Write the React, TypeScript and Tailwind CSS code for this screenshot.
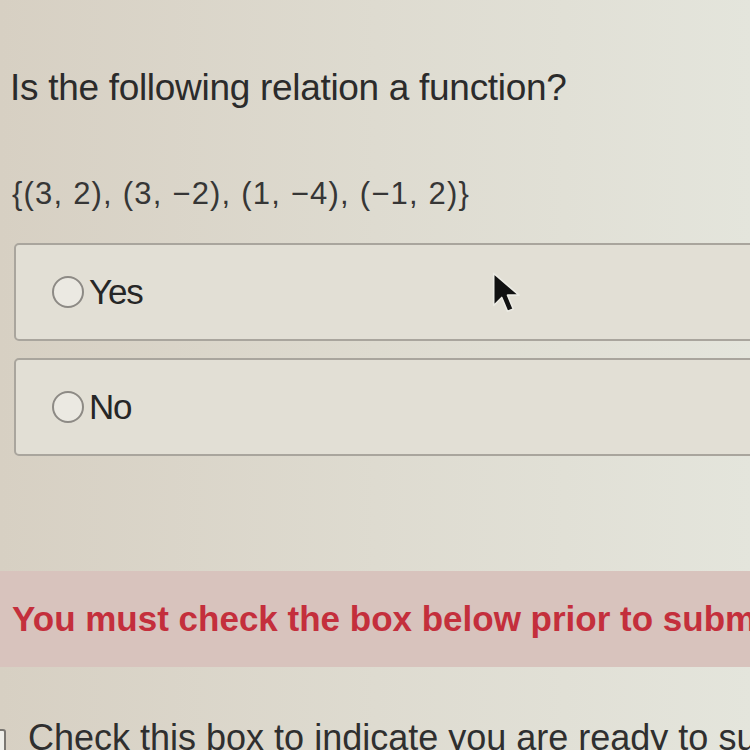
import React from "react";

function Cursor() {
  return (
    <svg
      className="absolute left-[490px] top-[271px]"
      width="35"
      height="46"
      viewBox="0 0 30 40"
    >
      <path
        d="M3 2 L3 30 L10 23 L15 35 L20 33 L15 21 L25 21 Z"
        fill="#111111"
        stroke="#ecebe4"
        strokeWidth="1.4"
        strokeLinejoin="round"
      />
    </svg>
  );
}

function Choice({ label }: { label: string }) {
  return (
    <label className="flex items-center h-[98px] w-[780px] rounded-[5px] border-2 border-[#a9a59d] bg-[#e2dfd5] pl-[36px]">
      <span className="shrink-0 inline-block w-[32px] h-[32px] rounded-full border-2 border-[#8d8a85] bg-[#ebe9e2]" />
      <span className="ml-[5px] text-[35px] leading-[40px] tracking-[-1.2px] text-[#262626]">{label}</span>
    </label>
  );
}

export default function App() {
  return (
    <div
      className="relative w-[750px] h-[750px] overflow-hidden bg-linear-to-r from-[#d7d0c3] via-[#dedbd0] to-[#e4e5dc]"
      style={{ fontFamily: '"Liberation Sans", Arial, sans-serif' }}
    >
      <div className="pl-[10px] pt-[68px]">
        <h1 className="text-[37px] leading-[40px] tracking-[-0.3px] whitespace-nowrap text-[#2b2b2b]">
          Is the following relation a function?
        </h1>
        <p className="mt-[68px] pl-[2px] text-[31px] leading-[36px] tracking-[1.2px] whitespace-nowrap text-[#363636]">
          {"{(3, 2), (3, \u22122), (1, \u22124), (\u22121, 2)}"}
        </p>
      </div>

      <div className="mt-[31px] flex flex-col gap-[17px] pl-[14px]">
        <Choice label="Yes" />
        <Choice label="No" />
      </div>

      <div className="mt-[115px] flex items-center h-[96px] bg-[#d8c3bd] pl-[12px]">
        <span className="text-[35px] font-bold whitespace-nowrap text-[#c42f3c]">
          You must check the box below prior to submitting
        </span>
      </div>

      <div className="mt-[49px] flex items-center">
        <span className="shrink-0 inline-block w-[20px] h-[28px] -ml-[14px] mt-[10px] rounded-[3px] border-2 border-[#7a7772] bg-[#efefea]" />
        <span className="shrink-0 ml-[22px] text-[36px] leading-[44px] whitespace-nowrap text-[#2f2f2f]">
          Check this box to indicate you are ready to submit
        </span>
      </div>

      <Cursor />
    </div>
  );
}
